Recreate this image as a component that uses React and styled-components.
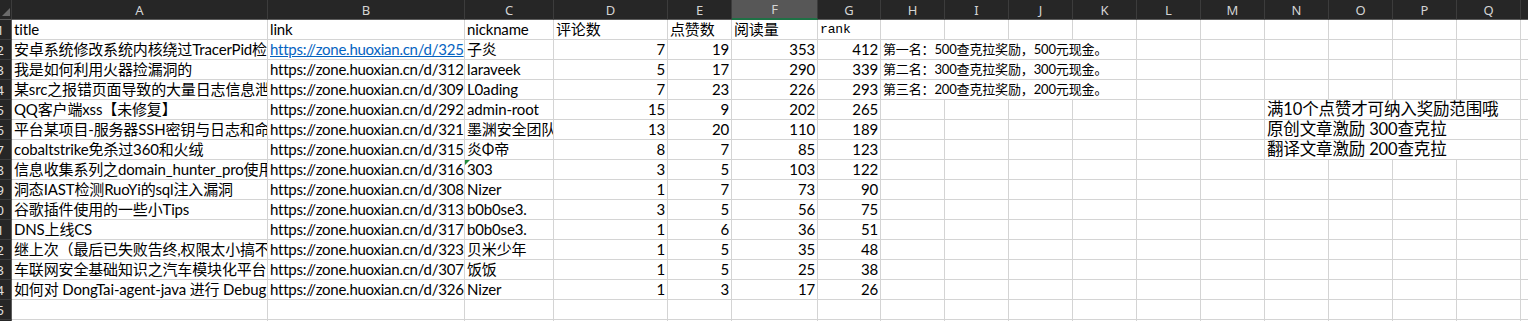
import styled, { createGlobalStyle } from "styled-components";

const GlobalStyle = createGlobalStyle`
  html, body {
    margin: 0;
    padding: 0;
    background: #ffffff;
    overflow: hidden;
  }
`;

const COLS = ["A", "B", "C", "D", "E", "F", "G", "H", "I", "J", "K", "L", "M", "N", "O", "P", "Q", "R"];
const WIDTHS = [256, 197, 89, 114, 64, 86, 63, 64, 64, 64, 64, 64, 64, 64, 64, 64, 64, 64];

const LINK = "https://zone.huoxian.cn/d/";
const BODY_FONT = 'Lato, "Noto Sans CJK SC", sans-serif';

const rows = [
  ["安卓系统修改系统内核绕过TracerPid检测", "325", "子炎", 7, 19, 353, 412, "第一名：500查克拉奖励，500元现金。"],
  ["我是如何利用火器捡漏洞的", "312", "laraveek", 5, 17, 290, 339, "第二名：300查克拉奖励，300元现金。"],
  ["某src之报错页面导致的大量日志信息泄露", "309", "L0ading", 7, 23, 226, 293, "第三名：200查克拉奖励，200元现金。"],
  ["QQ客户端xss【未修复】", "292", "admin-root", 15, 9, 202, 265, null, "满10个点赞才可纳入奖励范围哦"],
  ["平台某项目-服务器SSH密钥与日志和命令泄露", "321", "墨渊安全团队", 13, 20, 110, 189, null, "原创文章激励 300查克拉"],
  ["cobaltstrike免杀过360和火绒", "315", "炎Φ帝", 8, 7, 85, 123, null, "翻译文章激励 200查克拉"],
  ["信息收集系列之domain_hunter_pro使用", "316", "303", 3, 5, 103, 122],
  ["洞态IAST检测RuoYi的sql注入漏洞", "308", "Nizer", 1, 7, 73, 90],
  ["谷歌插件使用的一些小Tips", "313", "b0b0se3.", 3, 5, 56, 75],
  ["DNS上线CS", "317", "b0b0se3.", 1, 6, 36, 51],
  ["继上次（最后已失败告终,权限太小搞不了）", "323", "贝米少年", 1, 5, 35, 48],
  ["车联网安全基础知识之汽车模块化平台", "307", "饭饭", 1, 5, 25, 38],
  ["如何对 DongTai-agent-java 进行 Debug", "326", "Nizer", 1, 3, 17, 26],
];

const Sheet = styled.div`
  display: grid;
  grid-template-columns: 12px ${WIDTHS.map((w) => `${w}px`).join(" ")};
  grid-auto-rows: 20px;
  width: max-content;
  font-family: ${BODY_FONT};
`;

const Corner = styled.div`
  background: #262626;
  border-right: 1px solid #3c3c3c;
  border-bottom: 1px solid #5c5c5c;
  box-sizing: border-box;
  display: flex;
  align-items: flex-end;
  justify-content: flex-end;
  padding: 0 1px 3px 0;
`;

const ColHeader = styled.div`
  background: ${({ $active }) => ($active ? "#575757" : "#262626")};
  color: #d4d4d4;
  font-family: "Noto Sans", sans-serif;
  font-size: 13px;
  display: flex;
  align-items: center;
  justify-content: center;
  box-sizing: border-box;
  border-right: 1px solid #3c3c3c;
  border-bottom: ${({ $active }) => ($active ? "2px solid #1e7145" : "1px solid #5c5c5c")};
`;

const RowHeader = styled.div`
  background: #262626;
  color: #e0e0e0;
  font-family: "Noto Sans", sans-serif;
  font-size: 13px;
  display: flex;
  align-items: center;
  justify-content: flex-end;
  padding-right: 7px;
  overflow: hidden;
  box-sizing: border-box;
  border-right: 1px solid #5c5c5c;
  border-bottom: 1px solid #3c3c3c;
`;

const Cell = styled.div`
  position: relative;
  grid-column: ${({ $span }) => ($span ? `span ${$span}` : "auto")};
  box-sizing: border-box;
  border-right: 1px solid #d4d4d4;
  border-bottom: 1px solid #d4d4d4;
  padding: 0 2px;
  overflow: hidden;
  white-space: nowrap;
  letter-spacing: ${({ $link }) => ($link ? "-0.25px" : "-0.15px")};
  text-align: ${({ $num }) => ($num ? "right" : "left")};
  font-size: ${({ $size }) => $size || 15}px;
  line-height: 19px;
  color: ${({ $blue }) => ($blue ? "#0563c1" : "#000000")};
  text-decoration: ${({ $blue }) => ($blue ? "underline" : "none")};
  font-family: ${({ $mono }) => ($mono ? '"Liberation Mono", monospace' : BODY_FONT)};
`;

const TextFlag = styled.span`
  position: absolute;
  left: 0;
  top: 0;
  width: 0;
  height: 0;
  border-top: 5px solid #1e8a3a;
  border-right: 5px solid transparent;
`;

function Blank({ count }) {
  return Array.from({ length: count }, (_, i) => <Cell key={i} />);
}

function DataRow({ n, row }) {
  if (!row) {
    return (
      <>
        <RowHeader>{n}</RowHeader>
        <Blank count={COLS.length} />
      </>
    );
  }
  const [title, id, nick, c, l, r, rank, note, tip] = row;
  return (
    <>
      <RowHeader>{n}</RowHeader>
      <Cell>{title}</Cell>
      <Cell $link $blue={n === 2}>{LINK + id}</Cell>
      <Cell>
        {nick === "303" && <TextFlag />}
        {nick}
      </Cell>
      <Cell $num>{c}</Cell>
      <Cell $num>{l}</Cell>
      <Cell $num>{r}</Cell>
      <Cell $num>{rank}</Cell>
      {note ? (
        <>
          <Cell $span={4} $size={13}>{note}</Cell>
          <Blank count={7} />
        </>
      ) : tip ? (
        <>
          <Blank count={6} />
          <Cell $span={4} $size={16.5}>{tip}</Cell>
          <Blank count={1} />
        </>
      ) : (
        <Blank count={11} />
      )}
    </>
  );
}

export default function App() {
  return (
    <>
      <GlobalStyle />
      <Sheet>
        <Corner>
          <svg width="8" height="8" viewBox="0 0 8 8">
            <polygon points="8,0 8,8 0,8" fill="#6b6b6b" />
          </svg>
        </Corner>
        {COLS.map((col) => (
          <ColHeader key={col} $active={col === "F"}>
            {col}
          </ColHeader>
        ))}

        <RowHeader>1</RowHeader>
        <Cell>title</Cell>
        <Cell>link</Cell>
        <Cell>nickname</Cell>
        <Cell>评论数</Cell>
        <Cell>点赞数</Cell>
        <Cell>阅读量</Cell>
        <Cell $mono $size={13}>rank</Cell>
        <Blank count={11} />

        {rows.map((row, i) => (
          <DataRow key={i} n={i + 2} row={row} />
        ))}
        <DataRow n={15} />
        <DataRow n={16} />
      </Sheet>
    </>
  );
}
